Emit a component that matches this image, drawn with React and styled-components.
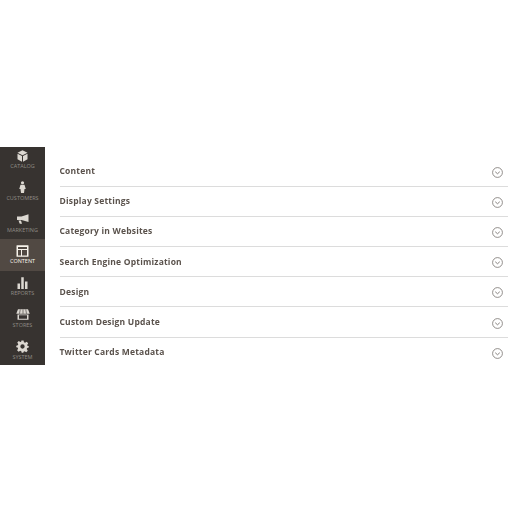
import React from 'react';
import styled, { createGlobalStyle } from 'styled-components';

const GlobalStyle = createGlobalStyle`
  html, body {
    margin: 0;
    padding: 0;
    background: #fff;
    font-family: "Open Sans", "Liberation Sans", sans-serif;
  }
`;

const CatalogIcon = () => (
  <svg width="11" height="12" viewBox="0 0 22 24" fill="currentColor">
    <path d="M11 0.500 L21 5.500 L11 10.500 L1 5.500 Z" />
    <path d="M1 7.500 L10 12 V23.500 L1 18.500 Z" />
    <path d="M21 7.500 L12 12 V23.500 L21 18.500 Z" />
  </svg>
);

const CustomersIcon = () => (
  <svg width="7" height="12" viewBox="0 0 14 24" fill="currentColor">
    <circle cx="7" cy="3.500" r="3.200" />
    <path d="M3 7.500 H11 L13.500 16 H11 L10 24 H4 L3 16 H0.500 Z" />
  </svg>
);

const MarketingIcon = () => (
  <svg width="13" height="10" viewBox="0 0 26 20" fill="currentColor">
    <path d="M25 0.500 V16 L11 12 H2 V5 H11 Z" />
    <path d="M5 13 H10 L12 19.500 H7.500 Z" />
  </svg>
);

const ContentIcon = () => (
  <svg width="13" height="12" viewBox="0 0 26 24">
    <rect x="1" y="0.500" width="24" height="23" rx="1" fill="#f7f3eb" />
    <rect x="4" y="4" width="18" height="4" fill="#514943" />
    <rect x="4" y="10" width="6" height="11" fill="#514943" />
    <rect x="12" y="10" width="10" height="11" fill="#514943" />
  </svg>
);

const ReportsIcon = () => (
  <svg width="11" height="12" viewBox="0 0 22 24" fill="currentColor">
    <rect x="1" y="13" width="5" height="11" />
    <rect x="8.500" y="0.500" width="5" height="23.500" />
    <rect x="16" y="9" width="5" height="15" />
  </svg>
);

const StoresIcon = () => (
  <svg width="14" height="11" viewBox="0 0 28 22" fill="currentColor">
    <path d="M4 0.500 H24 L27.500 9.500 H0.500 Z" />
    <path d="M3 11 H25 V21.500 H3 Z M6 12.500 V19.500 H22 V12.500 Z" fillRule="evenodd" />
    <path d="M8.500 1 L7 9.500 M14 1 V9.500 M19.500 1 L21 9.500" stroke="#373330" strokeWidth="1.200" />
  </svg>
);

const SystemIcon = () => (
  <svg width="13" height="13" viewBox="0 0 24 24" fill="currentColor">
    <path
      fillRule="evenodd"
      d="M10 1 H14 L14.700 4.300 L16.800 5.200 L19.700 3.300 L22.500 6.100 L20.600 9 L21.500 11 L23.500 11 V14 L20.700 14.700 L19.800 16.800 L21.700 19.700 L18.900 22.500 L16 20.600 L14 21.500 L13.500 23.500 H10.500 L9.800 20.700 L7.700 19.800 L4.800 21.700 L2 18.900 L3.900 16 L3 14 L0.500 13.500 V10.500 L3.300 9.800 L4.200 7.700 L2.300 4.800 L5.100 2 L8 3.900 L9.500 3.200 Z M12 8 A4 4 0 1 0 12 16 A4 4 0 1 0 12 8 Z"
    />
  </svg>
);

const ChevronCircle = () => (
  <svg width="11" height="11" viewBox="0 0 22 22" fill="none" stroke="#6f6a66" strokeWidth="1.500">
    <circle cx="11" cy="11" r="9.800" />
    <path d="M6.500 9.500 L11 13.500 L15.500 9.500" strokeWidth="1.700" />
  </svg>
);

// the whole shot is a soft upscale, so everything sits slightly out of focus
const Page = styled.div`
  display: flex;
  align-items: flex-start;
  padding-top: 147px;
  filter: blur(0.5px);
`;

const Sidebar = styled.nav`
  width: 45px;
  height: 218px;
  flex-shrink: 0;
  overflow: hidden;
  background: #373330;
`;

const NavList = styled.div`
  margin-top: -3.1px;
`;

const NavItem = styled.div`
  height: 31.8px;
  box-sizing: border-box;
  padding-top: 5.7px;
  display: flex;
  flex-direction: column;
  align-items: center;
  background: ${(p) => (p.$active ? '#514943' : 'transparent')};
  color: ${(p) => (p.$active ? '#f7f3eb' : '#8f8b86')};
`;

const NavIcon = styled.div`
  height: 12px;
  display: flex;
  align-items: center;
  justify-content: center;
  color: #dcd8d1;
`;

const NavLabel = styled.span`
  font-size: 5.5px;
  line-height: 8px;
  padding-top: 0.5px;
  text-transform: uppercase;
  white-space: nowrap;
`;

const Main = styled.main`
  flex: 1;
  padding: 9.500px 4px 0 14.500px;
`;

const Section = styled.div`
  height: 30.2px;
  box-sizing: border-box;
  display: flex;
  align-items: center;
  justify-content: space-between;
  padding-right: 5.500px;
  border-bottom: 1px solid ${(p) => (p.$last ? 'transparent' : '#dcdcdc')};
`;

const SectionTitle = styled.span`
  font-size: 8.500px;
  font-weight: 700;
  color: #5a524c;
  letter-spacing: 0.2px;
  margin-bottom: 1px;
`;

const Chevron = styled.span`
  display: flex;
  margin-top: 2px;
`;

const navItems = [
  { label: 'Catalog', icon: <CatalogIcon /> },
  { label: 'Customers', icon: <CustomersIcon /> },
  { label: 'Marketing', icon: <MarketingIcon /> },
  { label: 'Content', icon: <ContentIcon />, active: true },
  { label: 'Reports', icon: <ReportsIcon /> },
  { label: 'Stores', icon: <StoresIcon /> },
  { label: 'System', icon: <SystemIcon /> },
];

const sections = [
  'Content',
  'Display Settings',
  'Category in Websites',
  'Search Engine Optimization',
  'Design',
  'Custom Design Update',
  'Twitter Cards Metadata',
];

export default function App() {
  return (
    <>
      <GlobalStyle />
      <Page>
        <Sidebar>
          <NavList>
            {navItems.map((item) => (
              <NavItem key={item.label} $active={item.active}>
                <NavIcon>{item.icon}</NavIcon>
                <NavLabel>{item.label}</NavLabel>
              </NavItem>
            ))}
          </NavList>
        </Sidebar>
        <Main>
          {sections.map((title, i) => (
            <Section key={title} $last={i === sections.length - 1}>
              <SectionTitle>{title}</SectionTitle>
              <Chevron>
                <ChevronCircle />
              </Chevron>
            </Section>
          ))}
        </Main>
      </Page>
    </>
  );
}
